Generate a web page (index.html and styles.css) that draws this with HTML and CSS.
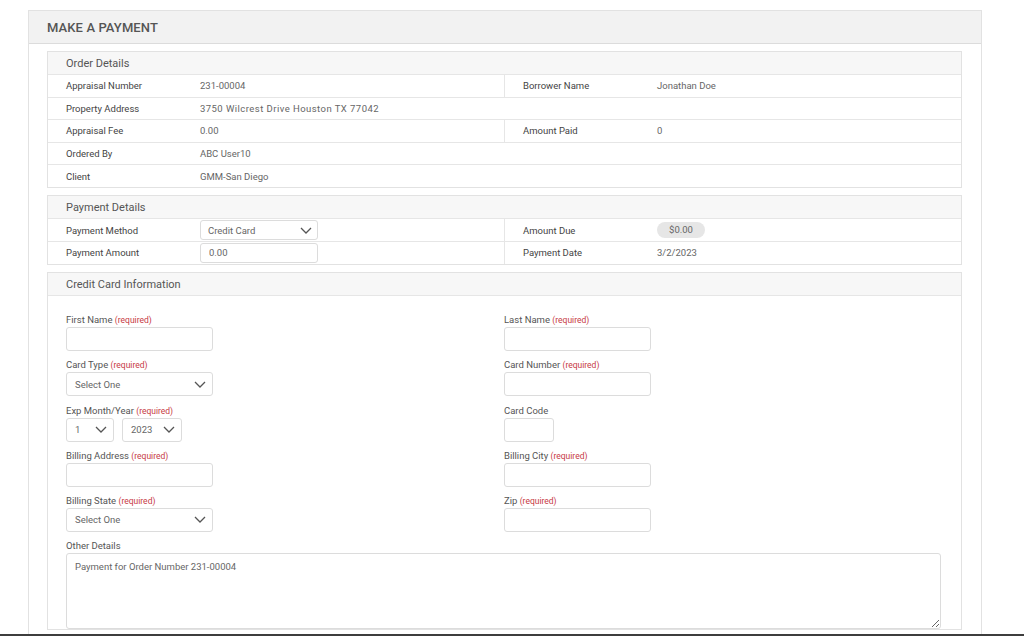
FILE: index.html
```html
<!DOCTYPE html>
<html lang="en">
<head>
<meta charset="utf-8">
<title>Make a Payment</title>
<link rel="stylesheet" href="styles.css">
</head>
<body>
<div class="panel">
  <div class="panel-head">MAKE A PAYMENT</div>
  <div class="panel-body">

    <section class="box">
      <div class="box-head">Order Details</div>
      <div class="row">
        <div class="cell"><span class="lbl">Appraisal Number</span><span class="val">231-00004</span></div>
        <div class="cell cell-right"><span class="lbl">Borrower Name</span><span class="val">Jonathan Doe</span></div>
      </div>
      <div class="row">
        <div class="cell"><span class="lbl">Property Address</span><span class="val val-address">3750 Wilcrest Drive Houston TX 77042</span></div>
      </div>
      <div class="row">
        <div class="cell"><span class="lbl">Appraisal Fee</span><span class="val">0.00</span></div>
        <div class="cell cell-right"><span class="lbl">Amount Paid</span><span class="val">0</span></div>
      </div>
      <div class="row">
        <div class="cell"><span class="lbl">Ordered By</span><span class="val">ABC User10</span></div>
      </div>
      <div class="row">
        <div class="cell"><span class="lbl">Client</span><span class="val">GMM-San Diego</span></div>
      </div>
    </section>

    <section class="box">
      <div class="box-head">Payment Details</div>
      <div class="row">
        <div class="cell">
          <span class="lbl">Payment Method</span>
          <div class="select select-inline">
            <span>Credit Card</span>
            <svg class="chev" width="12" height="7" viewBox="0 0 12 7"><path d="M1 1l5 5 5-5" fill="none" stroke="#555" stroke-width="1.3"/></svg>
          </div>
        </div>
        <div class="cell cell-right"><span class="lbl">Amount Due</span><span class="val"><span class="pill">$0.00</span></span></div>
      </div>
      <div class="row">
        <div class="cell">
          <span class="lbl">Payment Amount</span>
          <input class="input input-inline" type="text" value="0.00">
        </div>
        <div class="cell cell-right"><span class="lbl">Payment Date</span><span class="val">3/2/2023</span></div>
      </div>
    </section>

    <section class="box">
      <div class="box-head">Credit Card Information</div>
      <div class="form">
        <div class="field">
          <label class="flabel">First Name <span class="req">(required)</span></label>
          <input class="input w-md" type="text">
        </div>
        <div class="field">
          <label class="flabel">Last Name <span class="req">(required)</span></label>
          <input class="input w-md" type="text">
        </div>

        <div class="field">
          <label class="flabel">Card Type <span class="req">(required)</span></label>
          <div class="select w-md">
            <span>Select One</span>
            <svg class="chev" width="12" height="7" viewBox="0 0 12 7"><path d="M1 1l5 5 5-5" fill="none" stroke="#555" stroke-width="1.3"/></svg>
          </div>
        </div>
        <div class="field">
          <label class="flabel">Card Number <span class="req">(required)</span></label>
          <input class="input w-md" type="text">
        </div>

        <div class="field">
          <label class="flabel">Exp Month/Year <span class="req">(required)</span></label>
          <div class="pair">
            <div class="select w-month">
              <span>1</span>
              <svg class="chev" width="12" height="7" viewBox="0 0 12 7"><path d="M1 1l5 5 5-5" fill="none" stroke="#555" stroke-width="1.3"/></svg>
            </div>
            <div class="select w-year">
              <span>2023</span>
              <svg class="chev" width="12" height="7" viewBox="0 0 12 7"><path d="M1 1l5 5 5-5" fill="none" stroke="#555" stroke-width="1.3"/></svg>
            </div>
          </div>
        </div>
        <div class="field">
          <label class="flabel">Card Code</label>
          <input class="input w-sm" type="text">
        </div>

        <div class="field">
          <label class="flabel">Billing Address <span class="req">(required)</span></label>
          <input class="input w-md" type="text">
        </div>
        <div class="field">
          <label class="flabel">Billing City <span class="req">(required)</span></label>
          <input class="input w-md" type="text">
        </div>

        <div class="field">
          <label class="flabel">Billing State <span class="req">(required)</span></label>
          <div class="select w-md">
            <span>Select One</span>
            <svg class="chev" width="12" height="7" viewBox="0 0 12 7"><path d="M1 1l5 5 5-5" fill="none" stroke="#555" stroke-width="1.3"/></svg>
          </div>
        </div>
        <div class="field">
          <label class="flabel">Zip <span class="req">(required)</span></label>
          <input class="input w-md" type="text">
        </div>

        <div class="field field-wide">
          <label class="flabel">Other Details</label>
          <textarea class="textarea">Payment for Order Number 231-00004</textarea>
        </div>
      </div>
    </section>

  </div>
</div>
<div class="footer-line"></div>
</body>
</html>
```

FILE: styles.css
```css
html, body {
  margin: 0;
  padding: 0;
  overflow: hidden;
  background: #fff;
}

body {
  font-family: Roboto, "Liberation Sans", Arial, sans-serif;
  color: #555;
  font-size: 9.5px;
}

.panel {
  margin: 10px 0 0 28px;
  width: 952px;
  border: 1px solid #e2e2e2;
  border-bottom: none;
  background: #fff;
}

.panel-head {
  height: 32px;
  line-height: 33px;
  padding-left: 18px;
  background: #f2f2f2;
  border-bottom: 1px solid #dcdcdc;
  font-size: 13px;
  font-weight: 500;
  color: #555;
  letter-spacing: 0.1px;
}

.panel-body {
  padding: 7px 19px 40px 18px;
  display: flex;
  flex-direction: column;
  gap: 7.5px;
}

.box {
  border: 1px solid #e2e2e2;
  background: #fff;
}

.box-head {
  height: 22px;
  line-height: 23px;
  padding-left: 18px;
  background: #f7f7f7;
  font-size: 11px;
  color: #555;
}

.row {
  display: grid;
  grid-template-columns: 456px 1fr;
  height: 21.6px;
  border-top: 1px solid #e6e6e6;
}

.cell {
  display: grid;
  grid-template-columns: 134px 1fr;
  align-items: center;
  padding-left: 18px;
}

.cell-right {
  border-left: 1px solid #e6e6e6;
}

.lbl {
  color: #444;
}

.val {
  color: #666;
}

.val-address {
  letter-spacing: 0.45px;
}

.pill {
  display: inline-block;
  width: 48px;
  height: 16px;
  line-height: 16px;
  text-align: center;
  border-radius: 8px;
  background: #e6e6e6;
  color: #666;
  font-size: 9.5px;
}

.input,
.select,
.textarea {
  box-sizing: border-box;
  border: 1px solid #dcdcdc;
  border-radius: 3px;
  background: #fff;
  font-family: inherit;
  font-size: 9.5px;
  color: #666;
  margin: 0;
  outline: none;
}

.input {
  height: 24px;
  padding: 0 8px;
}

.select {
  height: 24px;
  padding: 0 6px 0 8px;
  display: flex;
  align-items: center;
  justify-content: space-between;
}

.chev {
  flex: none;
}

.select-inline,
.input-inline {
  width: 118px;
  height: 20px;
}

.select-inline {
  font-size: 9.5px;
  padding: 0 5px 0 7px;
}

.form {
  border-top: 1px solid #e6e6e6;
  padding: 18px 20px 0 18px;
  display: grid;
  grid-template-columns: 438px 1fr;
  row-gap: 8.2px;
}

.field {
  display: flex;
  flex-direction: column;
  align-items: flex-start;
}

.field-wide {
  grid-column: 1 / -1;
  align-items: stretch;
}

.flabel {
  line-height: 12px;
  margin-bottom: 1px;
  color: #555;
}

.req {
  color: #c73a45;
  font-size: 8.5px;
}

.w-md { width: 147px; }
.w-sm { width: 50px; }
.w-month { width: 48px; }
.w-year { width: 60px; }

.pair {
  display: flex;
  gap: 8px;
}

.textarea {
  height: 76px;
  width: 100%;
  padding: 7px 8px;
  resize: vertical;
  line-height: 12px;
}

.footer-line {
  position: fixed;
  left: 0;
  right: 0;
  bottom: 0;
  height: 2px;
  background: #3d3d3d;
}
```
